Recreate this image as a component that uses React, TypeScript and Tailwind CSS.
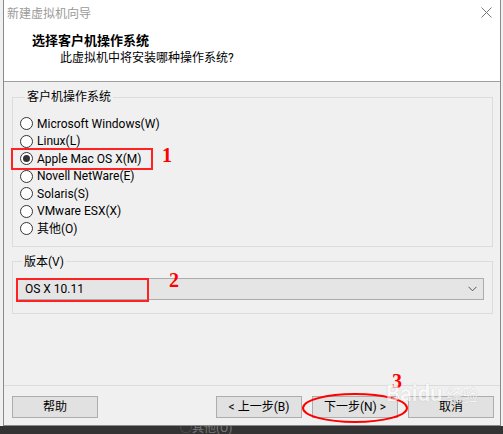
import React from 'react';

const options = [
    'Microsoft Windows(W)',
    'Linux(L)',
    'Apple Mac OS X(M)',
    'Novell NetWare(E)',
    'Solaris(S)',
    'VMware ESX(X)',
    '其他(O)',
];

const Radio: React.FC<{ checked?: boolean }> = ({ checked }) => (
    <span className="w-[13px] h-[13px] rounded-full border border-[#333] bg-white flex items-center justify-center shrink-0">
        {checked && <span className="w-[7px] h-[7px] rounded-full bg-[#333]" />}
    </span>
);

const Button: React.FC<{ label: string }> = ({ label }) => (
    <button className="w-[86px] h-[22px] bg-[#e1e1e1] border border-[#adadad] text-[12px] leading-none text-black">
        {label}
    </button>
);

export default function App() {
    return (
        <div className="relative w-[503px] h-[434px] bg-[#f0f0f0] overflow-hidden font-['Roboto','Noto_Sans_CJK_SC',sans-serif] text-[12px] text-black">
            <div className="ml-[3px] w-[498px] h-[426px] border-l border-r border-b border-[#8a8a8a] flex flex-col">
                {/* title + header */}
                <div className="bg-white h-[82px] border-b border-[#a0a0a0] flex flex-col">
                    <div className="h-[28px] flex items-center justify-between pl-[3px] pr-[8px]">
                        <span className="text-[#9a9a9a] leading-4">新建虚拟机向导</span>
                        <svg width="11" height="11" viewBox="0 0 11 11" className="mb-[3px]">
                            <path d="M0.5 0.5 L10.5 10.5 M10.5 0.5 L0.5 10.5" stroke="#777" strokeWidth="1" />
                        </svg>
                    </div>
                    <div className="mt-[5px] pl-[28px] font-bold text-[13px] leading-4">选择客户机操作系统</div>
                    <div className="mt-[1px] pl-[56px] leading-4">此虚拟机中将安装哪种操作系统?</div>
                </div>

                {/* content */}
                <div className="flex-1 flex flex-col pl-[8px] pr-[7px]">
                    <fieldset className="mt-[7px] border border-[#dcdcdc] pt-[10px] pb-[8px] pl-[7px]">
                        <legend className="ml-[5px] px-[2px] leading-4">客户机操作系统</legend>
                        {options.map((o, i) => (
                            <div key={o} className="h-[17.5px] flex items-center gap-[4px]">
                                <Radio checked={i === 2} />
                                <span className="leading-4">{o}</span>
                            </div>
                        ))}
                    </fieldset>

                    <fieldset className="mt-[7px] border border-[#dcdcdc] pt-[8px] pb-[13px] pl-[4px] pr-[8px]">
                        <legend className="ml-[5px] px-[2px] leading-4">版本(V)</legend>
                        <div className="h-[22px] bg-[#e5e5e5] border border-[#acacac] flex items-center justify-between pl-[7px] pr-[6px]">
                            <span className="leading-4">OS X 10.11</span>
                            <svg width="9" height="6" viewBox="0 0 9 6">
                                <path d="M0.5 0.8 L4.5 4.8 L8.5 0.8" fill="none" stroke="#555" strokeWidth="1" />
                            </svg>
                        </div>
                    </fieldset>
                    <div className="flex-1" />
                </div>

                {/* buttons */}
                <div className="border-t border-[#dcdcdc] pt-[10px] pb-[7px] pl-[8px] pr-[6px] flex items-center">
                    <Button label="帮助" />
                    <div className="flex-1" />
                    <div className="flex gap-[10px]">
                        <Button label="< 上一步(B)" />
                        <Button label="下一步(N) >" />
                        <Button label="取消" />
                    </div>
                </div>
            </div>

            {/* window behind */}
            <div className="h-[8px] bg-[#333] overflow-hidden pl-[180px]">
                <span className="text-[#777] leading-4 block -mt-[6px]">◯其他(O)</span>
            </div>

            {/* annotations */}
            <div className="absolute left-[11px] top-[148px] w-[142px] h-[22px] border-2 border-[#f22]" />
            <span className="absolute left-[162px] top-[143px] text-[20px] leading-6 font-bold text-[#f00] font-['Liberation_Serif',serif]">1</span>
            <div className="absolute left-[16px] top-[278px] w-[133px] h-[24px] border-2 border-[#f22]" />
            <span className="absolute left-[169px] top-[268px] text-[20px] leading-6 font-bold text-[#f00] font-['Liberation_Serif',serif]">2</span>
            <span className="absolute left-[392px] top-[369px] text-[20px] leading-6 font-bold text-[#f00] font-['Liberation_Serif',serif]">3</span>
            <svg className="absolute left-[300px] top-[390px]" width="112" height="36" viewBox="0 0 112 36">
                <ellipse cx="55" cy="18" rx="52" ry="14" fill="none" stroke="#f00" strokeWidth="2" />
            </svg>
            <div className="absolute left-[386px] top-[382px] flex items-end gap-[4px] opacity-60 pointer-events-none">
                <span className="text-[22px] font-bold text-white leading-6 [text-shadow:0_0_1px_#999]">Baidu</span>
                <span className="text-[16px] text-white leading-5 [text-shadow:0_0_1px_#999]">经验</span>
            </div>
        </div>
    );
}
